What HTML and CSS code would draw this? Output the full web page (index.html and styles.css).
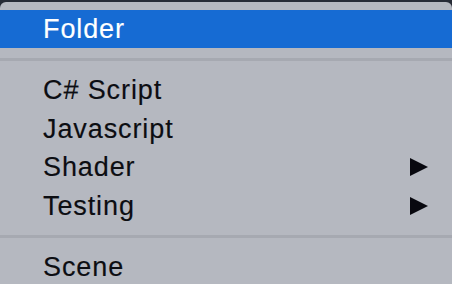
FILE: index.html
```html
<!DOCTYPE html>
<html>
<head>
<meta charset="utf-8">
<link rel="stylesheet" href="styles.css">
</head>
<body>
<div class="menu">
  <div class="item active">Folder</div>
  <div class="sep"></div>
  <div class="item">C# Script</div>
  <div class="item">Javascript</div>
  <div class="item has-sub">Shader<span class="arrow"></span></div>
  <div class="item has-sub">Testing<span class="arrow"></span></div>
  <div class="sep"></div>
  <div class="item">Scene</div>
</div>
</body>
</html>
```
FILE: styles.css
```css
html, body {
  margin: 0;
  padding: 0;
  background: #262b36;
  height: 284px;
  overflow: hidden;
}
.menu {
  margin-top: 2px;
  background: #b5b8c0;
  border-radius: 6px 6px 0 0;
  padding-top: 8px;
  height: 274px;
  overflow: hidden;
  font-family: "Liberation Sans", Arial, sans-serif;
  font-size: 27px;
  letter-spacing: 0.9px;
  color: #0c0d12;
  -webkit-text-stroke: 0.15px currentColor;
}
.item {
  height: 38.5px;
  line-height: 38.5px;
  padding-left: 43px;
  padding-right: 24px;
  display: flex;
  align-items: center;
  justify-content: space-between;
}
.item.active {
  height: 38px;
  line-height: 38px;
  background: #166bd3;
  color: #ffffff;
}
.sep {
  height: 3px;
  margin: 10px 0;
  background: #a6a9b1;
}
.arrow {
  width: 0;
  height: 0;
  border-left: 18px solid #08080f;
  border-top: 9.5px solid transparent;
  border-bottom: 9.5px solid transparent;
}
```
